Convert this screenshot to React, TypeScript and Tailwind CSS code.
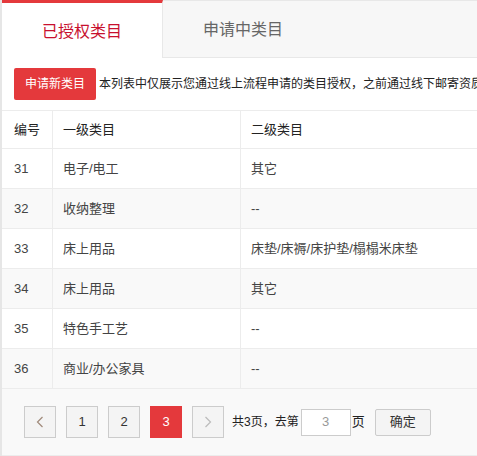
import React from 'react';

const rows = [
  { id: 31, first: '电子/电工', second: '其它' },
  { id: 32, first: '收纳整理', second: '--' },
  { id: 33, first: '床上用品', second: '床垫/床褥/床护垫/榻榻米床垫' },
  { id: 34, first: '床上用品', second: '其它' },
  { id: 35, first: '特色手工艺', second: '--' },
  { id: 36, first: '商业/办公家具', second: '--' },
];

const Chevron: React.FC<{ dir: 'left' | 'right'; color: string }> = ({ dir, color }) => (
  <svg width="8" height="12" viewBox="0 0 8 12" fill="none">
    <polyline
      points={dir === 'left' ? '6.5,1 1.5,6 6.5,11' : '1.5,1 6.5,6 1.5,11'}
      stroke={color}
      strokeWidth="1.2"
    />
  </svg>
);

export default function App() {
  return (
    <div className="w-[477px] h-[456px] overflow-hidden bg-white flex font-['Liberation_Sans','Noto_Sans_CJK_SC',sans-serif]">
      <div className="w-[2px] shrink-0 bg-[#e6e6e6]" />
      <div className="flex-1 min-w-0 flex flex-col">
        {/* tabs */}
        <div className="h-[58px] shrink-0 flex bg-[#f7f7f7] border-t border-b border-[#e8e8e8]">
          <div className="w-[161px] -mt-px h-[58px] pt-[2px] bg-white border-t-[3px] border-t-[#e4393c] border-r border-r-[#e8e8e8] flex items-center justify-center text-[16px] text-[#c8102e]">
            已授权类目
          </div>
          <div className="w-[160px] pt-[2px] flex items-center justify-center text-[16px] text-[#666]">
            申请中类目
          </div>
        </div>

        {/* notice */}
        <div className="h-[52px] shrink-0 flex items-center pl-[12px] whitespace-nowrap overflow-hidden">
          <button className="h-[32px] w-[82px] shrink-0 rounded-[2px] bg-[#e4393c] text-white text-[12px]">
            申请新类目
          </button>
          <span className="ml-[3px] text-[12px] text-[#222]">
            本列表中仅展示您通过线上流程申请的类目授权，之前通过线下邮寄资质
          </span>
        </div>

        {/* table */}
        <div className="w-[560px] text-[13px]">
          <div className="flex h-[39px] border-t border-b border-[#ececec] text-[#222]">
            <div className="w-[51px] shrink-0 flex items-center pl-[12px] border-r border-[#ececec]">编号</div>
            <div className="w-[188px] shrink-0 flex items-center pl-[10px] border-r border-[#ececec]">一级类目</div>
            <div className="flex-1 flex items-center pl-[10px]">二级类目</div>
          </div>
          {rows.map((r, i) => (
            <div
              key={r.id}
              className={`flex h-[40px] border-b border-[#ececec] text-[#444] ${
                i % 2 === 1 ? 'bg-[#f9f9f9]' : 'bg-white'
              }`}
            >
              <div className="w-[51px] shrink-0 flex items-center pl-[12px] border-r border-[#ececec]">{r.id}</div>
              <div className="w-[188px] shrink-0 flex items-center pl-[10px] border-r border-[#ececec]">{r.first}</div>
              <div className="flex-1 flex items-center pl-[10px]">{r.second}</div>
            </div>
          ))}
        </div>

        {/* pagination */}
        <div className="h-[67px] shrink-0 bg-[#f9f9f9] border-b border-[#ececec] flex items-center pl-[22px] gap-[10px] text-[13px] whitespace-nowrap">
          <button className="w-[32px] h-[32px] border border-[#ccc] bg-[#f4f4f4] flex items-center justify-center">
            <Chevron dir="left" color="#a08a7a" />
          </button>
          <button className="w-[32px] h-[32px] border border-[#ccc] bg-[#f4f4f4] text-[#333]">1</button>
          <button className="w-[32px] h-[32px] border border-[#ccc] bg-[#f4f4f4] text-[#333]">2</button>
          <button className="w-[32px] h-[32px] bg-[#e4393c] text-white">3</button>
          <button className="w-[32px] h-[32px] border border-[#ccc] bg-[#f4f4f4] flex items-center justify-center">
            <Chevron dir="right" color="#bbb" />
          </button>
          <div className="flex items-center -ml-[2px] text-[12px] text-[#222]">
            <span>共3页，去第</span>
            <div className="ml-[2px] w-[50px] h-[27px] border border-[#ccc] bg-white flex items-center justify-center text-[13px] text-[#999]">
              3
            </div>
            <span className="ml-[1px] text-[13px]">页</span>
            <button className="ml-[10px] w-[56px] h-[27px] border border-[#ccc] rounded-[2px] bg-[#f4f4f4] text-[13px] text-[#333]">
              确定
            </button>
          </div>
        </div>
      </div>
    </div>
  );
}
